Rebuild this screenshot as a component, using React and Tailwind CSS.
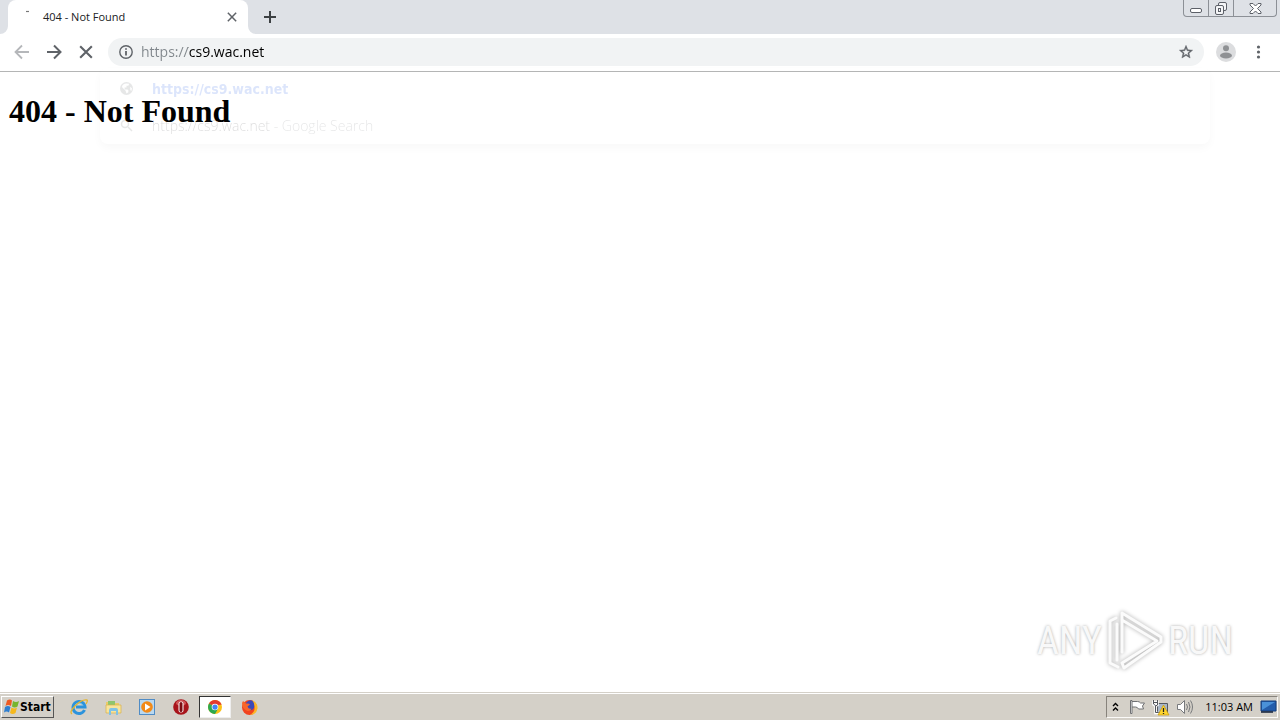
import React, { useState } from 'react'

const CloseIcon = ({ className }) => (
  <svg viewBox="0 0 12 12" className={className} fill="none" stroke="currentColor">
    <path d="M1 1l10 10M11 1L1 11" strokeWidth="1.8" />
  </svg>
)

const WindowButtons = () => (
  <div className="flex h-[17px] w-[94px] shrink-0 rounded-b-[4px] border border-t-0 border-[#8c9096] text-[#5c6068]">
    <button type="button" aria-label="Minimize" className="flex w-[25px] items-center justify-center border-r border-[#8c9096]">
      <svg width="13" height="16" viewBox="0 0 13 16" fill="#fff" stroke="currentColor">
        <rect x="0.5" y="8.5" width="11" height="4" rx="1.5" />
      </svg>
    </button>
    <button type="button" aria-label="Restore" className="flex w-[25px] items-center justify-center border-r border-[#8c9096]">
      <svg width="14" height="15" viewBox="0 0 14 15" fill="#f4f5f7" stroke="currentColor">
        <rect x="4.500" y="1.500" width="8" height="8" rx="1.500" />
        <rect x="1.500" y="4.500" width="8" height="9" rx="1.500" />
        <rect x="4.500" y="7.500" width="2" height="3" />
      </svg>
    </button>
    <button type="button" aria-label="Close window" className="flex flex-1 items-center justify-center">
      <svg width="13" height="13" viewBox="0 0 13 13" fill="#fff" stroke="currentColor" strokeLinejoin="round">
        <path d="M1 1.500h3l2.500 2.500L9 1.500h3v1.500L8.500 6.500l3.500 3.500v1.500H9L6.500 9 4 11.500H1V10l3.500-3.500L1 3z" />
      </svg>
    </button>
  </div>
)

const TabStrip = () => (
  <header className="flex h-[34px] items-start bg-[#dee1e6] pl-2 pr-[3px]">
    <div className="relative flex h-full w-60 items-center rounded-t-lg bg-white pl-[11px] pr-[11px]">
      {/* curved feet of the tab */}
      <svg className="absolute -left-2 bottom-0" width="8" height="8" viewBox="0 0 8 8" fill="#fff">
        <path d="M8 0v8H0a8 8 0 0 0 8-8z" />
      </svg>
      <svg className="absolute -right-2 bottom-0" width="8" height="8" viewBox="0 0 8 8" fill="#fff">
        <path d="M0 0v8h8a8 8 0 0 1-8-8z" />
      </svg>
      <svg width="16" height="16" viewBox="0 0 16 16" fill="none" stroke="#777" strokeWidth="1.200">
        <path d="M7 2.500h3" />
      </svg>
      <span className="ml-2 flex-1 text-[11px] leading-4 text-[#202124]">404 - Not Found</span>
      <button type="button" aria-label="Close tab" className="text-[#5f6368]">
        <CloseIcon className="size-[10px]" />
      </button>
    </div>
    <button type="button" aria-label="New tab" className="ml-4 flex h-[34px] items-center text-[#3c4043]">
      <svg width="12" height="12" viewBox="0 0 12 12" stroke="currentColor" strokeWidth="2">
        <path d="M6 0v12M0 6h12" />
      </svg>
    </button>
    <div className="flex-1" />
    <WindowButtons />
  </header>
)

const Suggestions = () => (
  <ul className="pointer-events-none absolute -left-2 -right-[6px] top-[30px] h-[76px] rounded-lg text-sm opacity-15 shadow-[0_4px_10px_rgba(0,0,0,0.2)]">
    <li className="flex h-[37px] items-center pl-5 pt-1">
      <svg width="13" height="13" viewBox="0 0 14 14">
        <circle cx="7" cy="7" r="7" fill="#5f6368" />
        <path d="M7 1.500l3 .5-1 2H7v2H5v2h3l1 1v2l-2 1.500-1-3-4-4a5 5 0 0 1 5-4zM11 5l2 2-1 3-1-2z" fill="#fff" />
      </svg>
      <span className="ml-[19px] font-['DejaVu_Sans_Condensed','DejaVu_Sans',sans-serif] font-bold text-[#1a56e8]">https://cs9.wac.net</span>
    </li>
    <li className="flex h-[37px] items-center pl-5 pt-1">
      <svg width="13" height="13" viewBox="0 0 13 13" fill="none" stroke="#5f6368" strokeWidth="1.500">
        <circle cx="5" cy="5" r="3.500" />
        <path d="M8 8l4 4" />
      </svg>
      <span className="ml-[19px] font-light text-[#202124]">
        https://cs9.wac.net <span className="text-[#5f6368]">- Google Search</span>
      </span>
    </li>
  </ul>
)

const AddressBar = () => {
  const [url, setUrl] = useState('https://cs9.wac.net')

  return (
    <div className="relative ml-[15px] flex h-7 flex-1 items-center rounded-full bg-[#f1f3f4] pl-[11px] pr-[10px]">
      <svg width="14" height="14" viewBox="0 0 14 14" fill="none" stroke="#5f6368" strokeWidth="1.400">
        <circle cx="7" cy="7" r="6.200" />
        <path d="M7 6v4.500M7 3.300v1.500" strokeWidth="1.800" />
      </svg>
      {/* scheme is dimmed, host is dark */}
      <input
        type="text"
        aria-label="Address"
        value={url}
        onChange={(e) => setUrl(e.target.value)}
        spellCheck={false}
        className="ml-2 min-w-0 flex-1 bg-[linear-gradient(90deg,#80868b_47px,#000_47px)] bg-clip-text text-sm text-transparent outline-none"
      />
      <button type="button" aria-label="Bookmark this page">
        <svg width="16" height="16" viewBox="0 0 24 24" fill="#5f6368" stroke="#5f6368" strokeWidth=".6">
          <path d="M22 9.240l-7.190-.62L12 2 9.190 8.630 2 9.240l5.460 4.730L5.820 21 12 17.270 18.180 21l-1.630-7.030L22 9.240zM12 15.400l-3.760 2.270 1-4.280-3.320-2.880 4.380-.38L12 6.100l1.710 4.040 4.380.38-3.320 2.880 1 4.280L12 15.400z" />
        </svg>
      </button>
      <Suggestions />
    </div>
  )
}

const Toolbar = () => (
  <nav className="flex h-[38px] items-center border-b border-[#b4b5b5] bg-white pb-px pl-[14px] pr-[19px] text-[#5f6368]">
    <button type="button" aria-label="Back" className="text-[#b5b7ba]">
      <svg width="16" height="16" viewBox="0 0 16 16" fill="none" stroke="currentColor" strokeWidth="1.800">
        <path d="M15 8H2M8 1.500L1.500 8 8 14.500" />
      </svg>
    </button>
    <button type="button" aria-label="Forward" className="ml-4">
      <svg width="16" height="16" viewBox="0 0 16 16" fill="none" stroke="currentColor" strokeWidth="2">
        <path d="M1 8h13M8 1.500L14.500 8 8 14.500" />
      </svg>
    </button>
    <button type="button" aria-label="Stop loading" className="ml-[17px]">
      <CloseIcon className="size-[14px]" />
    </button>
    <AddressBar />
    <button type="button" aria-label="Profile" className="ml-3">
      <svg width="20" height="20" viewBox="0 0 20 20">
        <circle cx="10" cy="10" r="10" fill="#dcdddf" />
        <circle cx="10" cy="6.200" r="3" fill="#8f9194" />
        <ellipse cx="10" cy="13.500" rx="6" ry="3" fill="#8f9194" />
      </svg>
    </button>
    <button type="button" aria-label="Menu" className="ml-5">
      <svg width="5" height="14" viewBox="0 0 5 14" fill="currentColor">
        <circle cx="2.500" cy="2" r="1.600" />
        <circle cx="2.500" cy="7" r="1.600" />
        <circle cx="2.500" cy="12" r="1.600" />
      </svg>
    </button>
  </nav>
)

const Watermark = () => (
  <div className="absolute bottom-[20px] right-[47px] flex items-center gap-[5px] font-['Roboto_Condensed','Roboto',sans-serif] text-[38px] leading-[60px] text-[#f8f8f8] [text-shadow:0_0_3px_#aaa]">
    <span>ANY</span>
    <svg
      width="56"
      height="62"
      viewBox="0 0 56 62"
      fill="none"
      stroke="#fbfbfb"
      strokeWidth="3"
      strokeLinejoin="round"
      strokeLinecap="round"
      className="drop-shadow-[0_0_2px_#aaa]"
    >
      <path d="M15 42V3l39 24v5L17 58l-2-5 35-22L15 10" />
      <path d="M9 8l-6 3v42l8 4" />
      <path d="M10 14v36" />
    </svg>
    <span>RUN</span>
  </div>
)

const StartLogo = () => (
  <svg width="17" height="16" viewBox="0 0 17 16">
    <path d="M4 1.500q3-2 5 0L8 7Q5 5 2.500 7z" fill="#ee5a22" />
    <path d="M10 2q3 2 6 0l-1.500 5.500q-3 2-5.500 0z" fill="#76b52f" />
    <path d="M2 8q3-2 5.500 0L6 13.500q-2.500-2-5 0z" fill="#2f7fd0" />
    <path d="M8.500 8.500q3 2 5.500 0L12.500 14q-3 2-5.500 0z" fill="#f5b81c" />
  </svg>
)

const InternetExplorerIcon = () => (
  <svg width="18" height="18" viewBox="0 0 18 18" fill="none">
    <path d="M14.500 12a6 6 0 1 1 .5-3H6" stroke="#2c93dc" strokeWidth="3" />
    <path d="M5 7.500q1-2.500 4-2.500t4 2.500" stroke="#74c4f1" />
    <path d="M2 16q-3-2 3-8 7-7 12-6 1 1-1 4" stroke="#e5b52e" strokeWidth="1.300" />
  </svg>
)

const ExplorerIcon = () => (
  <svg width="17" height="17" viewBox="0 0 17 17">
    <path d="M1 3h5l1 1h7v9H1z" fill="#eccb68" />
    <path d="M3 2h7v4H3z" fill="#8ec56e" />
    <path d="M1 6h15v8H1z" fill="#f8e49b" stroke="#d9b24c" strokeWidth=".7" />
    <path d="M4 16v-5q0-2 2-2h5q2 0 2 2v5h-2v-4H6v4z" fill="#7fc2e6" />
  </svg>
)

const MediaPlayerIcon = () => (
  <svg width="16" height="16" viewBox="0 0 16 16">
    <rect x=".5" y=".5" width="15" height="15" fill="#b9d8f0" stroke="#508cc5" />
    <circle cx="8" cy="8" r="5.800" fill="#f28a18" />
    <path d="M6 4.500v7L11.500 8z" fill="#fff" />
  </svg>
)

const OperaIcon = () => (
  <svg width="16" height="16" viewBox="0 0 16 16">
    <circle cx="8" cy="8" r="7.800" fill="#a8141b" />
    <ellipse cx="8" cy="4" rx="5" ry="3" fill="#cf5557" />
    <rect x="5.500" y="2.500" width="5" height="11" rx="2.500" fill="#fff" />
    <rect x="6.500" y="3" width="3" height="10" rx="1.500" fill="#7c0c12" />
  </svg>
)

const ChromeIcon = () => (
  <svg width="14" height="14" viewBox="0 0 16 16">
    <circle cx="8" cy="8" r="8" fill="#fbc116" />
    <path d="M8 8L1.100 4A8 8 0 0 1 14.900 4z" fill="#e33b2e" />
    <path d="M8 8L1.100 4A8 8 0 0 0 8 16l3.500-6z" fill="#2da94f" />
    <path d="M8 4h6.900a8 8 0 0 1 .6 1.500H8z" fill="#e33b2e" />
    <circle cx="8" cy="8" r="3.800" fill="#fff" />
    <circle cx="8" cy="8" r="3" fill="#4285f4" />
  </svg>
)

const FirefoxIcon = () => (
  <svg width="17" height="17" viewBox="0 0 17 17">
    <circle cx="8.500" cy="8.500" r="7.500" fill="#f1431f" />
    <path d="M5 4q3-4 7-2 3 3 1 7-3 4-6 1-3-3-2-6z" fill="#3b49b8" />
    <path d="M1 4l1-2 3 2.500q3-.5 4 1L6.500 7.500q1 3 4 2-1 3-4 2.500Q1 10 1 4z" fill="#f8662a" />
    <path d="M11 1q6 3 5.500 8.500-1 6-7.500 6.500 5-3 4.500-7Q14 4.500 11 1z" fill="#fcb626" />
  </svg>
)

const apps = [
  { name: 'Internet Explorer', Icon: InternetExplorerIcon },
  { name: 'Windows Explorer', Icon: ExplorerIcon },
  { name: 'Windows Media Player', Icon: MediaPlayerIcon },
  { name: 'Opera', Icon: OperaIcon },
  { name: 'Google Chrome', Icon: ChromeIcon, active: true },
  { name: 'Mozilla Firefox', Icon: FirefoxIcon },
]

const Tray = () => (
  <div className="flex h-[22px] items-center border border-[#fbfaf8] border-l-[#87837c] border-t-[#87837c] pl-[5px] text-[11px] text-black">
    <button type="button" aria-label="Show hidden icons">
      <svg width="7" height="10" viewBox="0 0 7 10" fill="none" stroke="#000" strokeWidth="1.400">
        <path d="M1 4l2.500-2.500L6 4M1 8.500L3.500 6 6 8.500" />
      </svg>
    </button>
    <svg className="ml-[10px]" width="17" height="16" viewBox="0 0 17 16" fill="#fff" stroke="#6f7073">
      <path d="M2.500 2.500h6q2 0 3 1.500h4l-2 3 1 3h-5q-1-2-3-2h-4z" />
      <path d="M1.500 1.500h1.500v13H1.500z" />
    </svg>
    <svg className="ml-[6px]" width="18" height="17" viewBox="0 0 18 17">
      <path d="M5.500 4.500h10v9h-10z" fill="#a9b7c8" stroke="#55585f" />
      <path d="M1.500 1.500v4l2 1.500v7h3M1.500 3.500h4v-2M5.500 3v3l-2 1" fill="none" stroke="#fff" strokeWidth="2.500" />
      <path d="M1.500 1v4l2 1.500v7h3M1.500 3.500h4V1M5.500 3v3l-2 1" fill="none" stroke="#55585f" />
      <path d="M11.500 6l5.500 10H6z" fill="#ffd52e" stroke="#c79807" strokeWidth=".7" />
      <path d="M11.500 9v4M11.500 14v1" stroke="#222" strokeWidth="1.300" />
    </svg>
    <svg className="ml-[6px]" width="17" height="16" viewBox="0 0 17 16" fill="none" stroke="#77797c">
      <path d="M1.500 5.500h3l4-4v13l-4-4h-3z" fill="#fff" />
      <path d="M10.500 5q2 3 0 6M12.500 3q3 5 0 10M14.500 1.500q4 6.500 0 13" />
    </svg>
    <time className="ml-3 leading-4">11:03 AM</time>
    <button type="button" aria-label="Show desktop" className="ml-[7px]">
      <svg width="17" height="14" viewBox="0 0 17 14">
        <path d="M1 1h15v10H1z" fill="#245dab" stroke="#143e7c" />
        <path d="M2 2h13L2 10z" fill="#4a91d9" />
        <path d="M1 12h12" stroke="#101f38" strokeWidth="1.500" />
      </svg>
    </button>
  </div>
)

const Taskbar = () => (
  <footer className="border-t border-[#d4d0c8] bg-[#d4d0c8]">
    <div className="flex h-[27px] items-center border-t border-white pl-px pr-[2px]">
      <button
        type="button"
        className="flex h-[22px] w-[53px] items-center border border-[#555] border-l-white border-t-white pl-px font-['DejaVu_Sans_Condensed','DejaVu_Sans',sans-serif] text-xs font-bold text-black"
      >
        <StartLogo />
        Start
      </button>
      <div className="ml-[9px] flex flex-1 items-center">
        {apps.map(({ name, Icon, active }) => (
          <button
            key={name}
            type="button"
            aria-label={name}
            className={`mr-[2px] flex h-[22px] w-8 items-center justify-center ${
              active ? 'border border-[#eee] border-l-[#333] border-t-[#333] bg-white' : ''
            }`}
          >
            <Icon />
          </button>
        ))}
      </div>
      <Tray />
    </div>
  </footer>
)

const App = () => {
  return (
    <div className="flex min-h-screen flex-col bg-white font-['Open_Sans','Noto_Sans',sans-serif]">
      <TabStrip />
      <Toolbar />

      {/* Page */}
      <main className="relative flex-1 px-[9px] pt-[21px]">
        <h1 className="font-['Liberation_Serif',serif] text-[32px] font-bold leading-9 text-black">404 - Not Found</h1>
        <Watermark />
      </main>

      <Taskbar />
    </div>
  )
}

export default App
